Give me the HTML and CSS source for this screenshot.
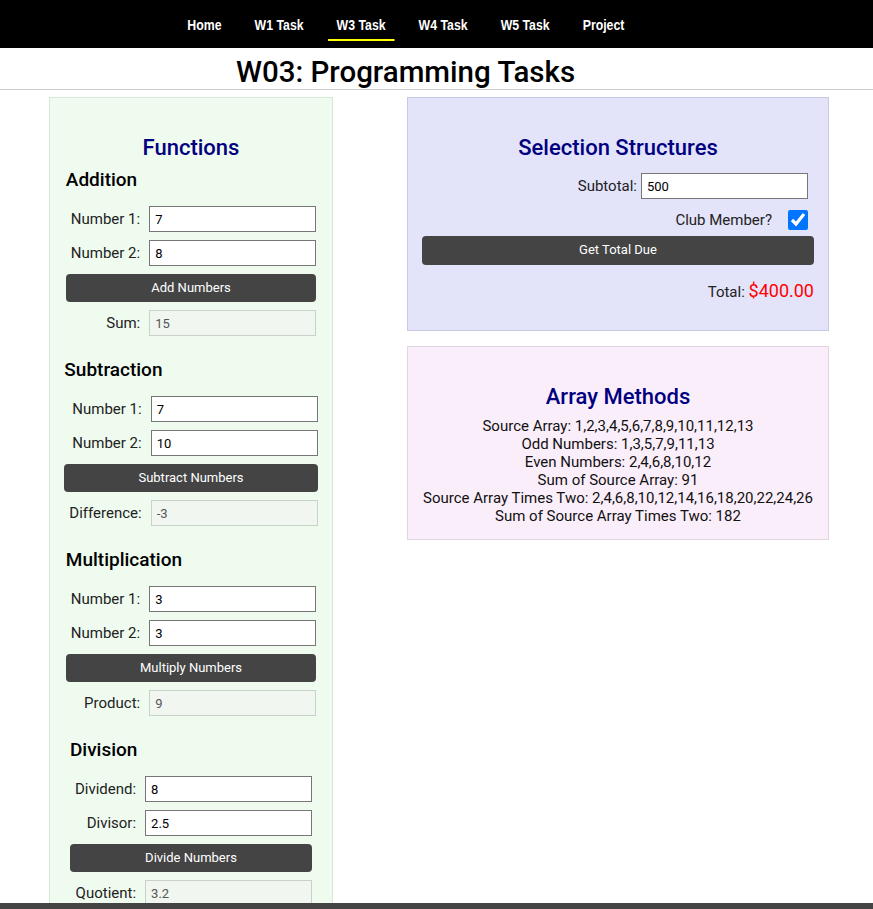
FILE: index.html
```html
<!DOCTYPE html>
<html lang="en">
<head>
<meta charset="utf-8">
<title>W03: Programming Tasks</title>
<link rel="stylesheet" href="styles.css">
</head>
<body>
<nav class="topnav">
  <ul class="nav-list">
    <li><a href="#">Home</a></li>
    <li><a href="#">W1 Task</a></li>
    <li><a href="#" class="active">W3 Task</a></li>
    <li><a href="#">W4 Task</a></li>
    <li><a href="#">W5 Task</a></li>
    <li><a href="#">Project</a></li>
  </ul>
</nav>
<header class="page-header">
  <h1>W03: Programming Tasks</h1>
</header>
<main class="layout">
  <section class="panel panel-functions">
    <h2>Functions</h2>
    <div class="op">
      <h3>Addition</h3>
      <div class="op-grid">
        <label for="add1">Number 1:</label><input id="add1" class="field" type="text" value="7">
        <label for="add2">Number 2:</label><input id="add2" class="field" type="text" value="8">
        <button class="btn op-btn" type="button">Add Numbers</button>
        <label for="sum">Sum:</label><input id="sum" class="field result" type="text" value="15" readonly>
      </div>
    </div>
    <div class="op">
      <h3>Subtraction</h3>
      <div class="op-grid">
        <label for="sub1">Number 1:</label><input id="sub1" class="field" type="text" value="7">
        <label for="sub2">Number 2:</label><input id="sub2" class="field" type="text" value="10">
        <button class="btn op-btn" type="button">Subtract Numbers</button>
        <label for="diff">Difference:</label><input id="diff" class="field result" type="text" value="-3" readonly>
      </div>
    </div>
    <div class="op">
      <h3>Multiplication</h3>
      <div class="op-grid">
        <label for="mul1">Number 1:</label><input id="mul1" class="field" type="text" value="3">
        <label for="mul2">Number 2:</label><input id="mul2" class="field" type="text" value="3">
        <button class="btn op-btn" type="button">Multiply Numbers</button>
        <label for="prod">Product:</label><input id="prod" class="field result" type="text" value="9" readonly>
      </div>
    </div>
    <div class="op">
      <h3>Division</h3>
      <div class="op-grid">
        <label for="div1">Dividend:</label><input id="div1" class="field" type="text" value="8">
        <label for="div2">Divisor:</label><input id="div2" class="field" type="text" value="2.5">
        <button class="btn op-btn" type="button">Divide Numbers</button>
        <label for="quot">Quotient:</label><input id="quot" class="field result" type="text" value="3.2" readonly>
      </div>
    </div>
  </section>

  <div class="right-col">
    <section class="panel panel-selection">
      <h2>Selection Structures</h2>
      <div class="sel-row sel-subtotal">
        <label for="subtotal">Subtotal:</label><input id="subtotal" class="field" type="text" value="500">
      </div>
      <div class="sel-row sel-member">
        <label for="member">Club Member?</label><input id="member" class="check" type="checkbox" checked>
      </div>
      <button class="btn sel-btn" type="button">Get Total Due</button>
      <p class="total">Total: <span class="total-amount">$400.00</span></p>
    </section>

    <section class="panel panel-arrays">
      <h2>Array Methods</h2>
      <div class="array-list">
        <div>Source Array: 1,2,3,4,5,6,7,8,9,10,11,12,13</div>
        <div>Odd Numbers: 1,3,5,7,9,11,13</div>
        <div>Even Numbers: 2,4,6,8,10,12</div>
        <div>Sum of Source Array: 91</div>
        <div>Source Array Times Two: 2,4,6,8,10,12,14,16,18,20,22,24,26</div>
        <div>Sum of Source Array Times Two: 182</div>
      </div>
    </section>
  </div>
</main>
<footer class="page-footer"></footer>
</body>
</html>
```

FILE: styles.css
```css
html {
  scrollbar-width: none;
}

body {
  margin: 0;
  font-family: Roboto, "Liberation Sans", Arial, sans-serif;
  color: #222;
  background: #fff;
}

/* Top navigation */
.topnav {
  background: #000;
  height: 48px;
  padding-right: 62px;
  display: flex;
  justify-content: center;
}

/* narrow-face look: the whole link strip is condensed horizontally */
.nav-list {
  list-style: none;
  margin: 0;
  padding: 0;
  display: flex;
  gap: 19.5px;
  transform: scaleX(0.82);
}

.nav-list a {
  display: block;
  padding: 16px 10.4px 6px;
  line-height: 17px;
  font-family: "Liberation Sans", Arial, sans-serif;
  font-weight: bold;
  font-size: 15px;
  color: #fff;
  text-decoration: none;
  border-bottom: 2px solid transparent;
}

.nav-list a.active {
  border-bottom-color: #ffff00;
}

/* Page title */
.page-header {
  border-bottom: 1px solid #cccccc;
  padding-right: 62px;
}

.page-header h1 {
  margin: 0;
  padding-top: 7px;
  font-size: 29.5px;
  line-height: 34px;
  font-weight: 500;
  text-align: center;
  color: #000;
}

/* Main layout */
.layout {
  display: grid;
  grid-template-columns: 284px 422px;
  column-gap: 74px;
  padding: 7px 0 0 49px;
  align-items: start;
}

.right-col {
  display: flex;
  flex-direction: column;
  gap: 15px;
}

.panel {
  border: 1px solid;
  padding: 37px 14px 15px;
}

.panel h2 {
  margin: 0;
  font-size: 22px;
  line-height: 26px;
  font-weight: 500;
  color: #000080;
  text-align: center;
}

/* Functions panel */
.panel-functions {
  background: #f0fbf0;
  border-color: #d6e8d6;
  padding: 37px 0 30px;
}

.op {
  width: fit-content;
  margin: 23px auto 0;
}

.panel-functions h2 + .op {
  margin-top: 8px;
}

.op h3 {
  margin: 0 0 15px;
  font-size: 19px;
  line-height: 22px;
  font-weight: 500;
  color: #000;
}

.op-grid {
  display: grid;
  grid-template-columns: auto 167px;
  column-gap: 9px;
  row-gap: 8px;
  align-items: center;
}

.op-grid label {
  padding-left: 5px;
  text-align: right;
  font-size: 15px;
  line-height: 18px;
}

.field {
  width: 167px;
  height: 26px;
  box-sizing: border-box;
  margin: 0;
  border: 1px solid #767676;
  border-radius: 0;
  padding: 0 5px;
  font-family: Roboto, "Liberation Sans", Arial, sans-serif;
  font-size: 13px;
  background: #fff;
  color: #000;
}

.field.result {
  background: #f1f6f1;
  border-color: #c8d2c8;
  color: #555;
}

.btn {
  height: 28px;
  margin: 0;
  padding: 0 0 1px;
  border: 0;
  border-radius: 4px;
  background: #444;
  color: #fff;
  font-family: Roboto, "Liberation Sans", Arial, sans-serif;
  font-size: 13px;
  cursor: pointer;
}

.op-btn {
  grid-column: 1 / -1;
}

/* Selection structures panel */
.panel-selection {
  background: #e3e3fa;
  border-color: #c9c9e6;
  padding: 37px 14px 27px;
}

.sel-row {
  display: flex;
  justify-content: flex-end;
  align-items: center;
  margin-right: 6px;
  font-size: 15px;
  line-height: 18px;
}

.sel-subtotal {
  margin-top: 12px;
  gap: 4px;
}

.sel-member {
  margin-top: 11px;
  gap: 16px;
  height: 20px;
}

.check {
  width: 20px;
  height: 20px;
  margin: 0;
  accent-color: #0075ff;
}

.sel-btn {
  display: block;
  width: 100%;
  height: 29px;
  margin-top: 6px;
  padding-bottom: 2px;
}

.total {
  margin: 15px 0 0;
  text-align: right;
  font-size: 15px;
  line-height: 21px;
}

.total-amount {
  color: #ff0000;
  font-size: 18px;
}

/* Array methods panel */
.panel-arrays {
  background: #fbeefb;
  border-color: #e2d5e2;
  padding: 37px 14px 14px;
  text-align: center;
}

.array-list {
  margin-top: 7px;
  font-size: 15px;
  line-height: 18px;
  color: #111;
}

/* Fixed footer strip */
.page-footer {
  position: fixed;
  left: 0;
  right: 0;
  bottom: 0;
  height: 6px;
  background: #444;
}
```
